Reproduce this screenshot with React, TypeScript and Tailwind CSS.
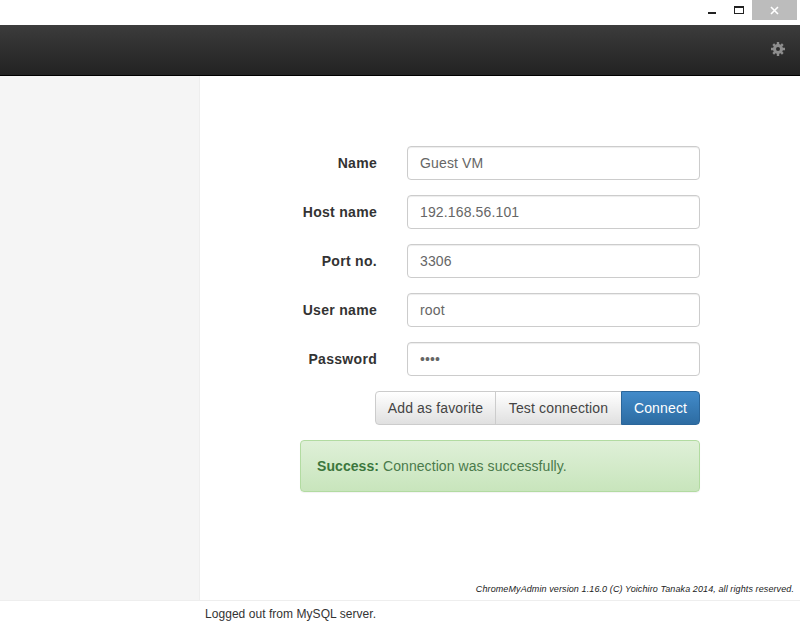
import React from "react";

function Field({ label, value, type = "text" }: { label: string; value: string; type?: string }) {
  return (
    <div className="flex items-center h-[34px] mb-[15px]">
      <label className="w-[77px] text-right font-bold text-[14px] tracking-[0.3px] text-[#333]">{label}</label>
      <input
        readOnly
        type={type}
        value={value}
        className="ml-[30px] w-[293px] h-[34px] px-3 rounded border border-[#ccc] bg-white text-[14px] tracking-[0.14px] text-[#666] outline-none shadow-[inset_0_1px_1px_rgba(0,0,0,0.075)]"
      />
    </div>
  );
}

export default function App() {
  return (
    <div className="w-[800px] h-[625px] flex flex-col bg-white overflow-hidden font-['Liberation_Sans',Arial,sans-serif]">
      <div className="h-[25px] flex justify-end shrink-0">
        <div className="w-[26px] flex items-start justify-center pt-[12px] mr-px">
          <div className="w-2 h-[2px] bg-[#222]" />
        </div>
        <div className="w-[26px] flex items-start justify-center pt-[6px]">
          <div className="w-[10px] h-2 border border-[#222] border-t-2" />
        </div>
        <div className="w-[45px] h-[20px] bg-[#bcbcbc] flex items-center justify-center mr-[3px]">
          <svg width="9" height="9" viewBox="0 0 9 9">
            <path d="M1 1l7 7M8 1l-7 7" stroke="#fff" strokeWidth="1.6" fill="none" />
          </svg>
        </div>
      </div>
      <div className="h-[51px] shrink-0 flex items-center justify-end pr-[15px] bg-gradient-to-b from-[#3c3c3c] to-[#222] border-b border-black">
        <svg width="14" height="14" viewBox="0 0 14 14" className="mb-[2px]">
          <g stroke="#8d8d8d" strokeWidth="2.4">
            <path d="M7 0v14M0 7h14M2.2 2.2l9.6 9.6M11.8 2.2L2.2 11.8" />
          </g>
          <circle cx="7" cy="7" r="5" fill="#8d8d8d" />
          <circle cx="7" cy="7" r="2" fill="#2d2d2d" />
        </svg>
      </div>
      <div className="flex-1 flex min-h-0">
        <div className="w-[200px] bg-[#f5f5f5] border-r border-[#eee] shrink-0" />
        <div className="flex-1 flex flex-col">
          <div className="flex-1 pt-[70px] pl-[100px]">
            <div className="w-[400px]">
              <Field label="Name" value="Guest VM" />
              <Field label="Host name" value="192.168.56.101" />
              <Field label="Port no." value="3306" />
              <Field label="User name" value="root" />
              <Field label="Password" value="root" type="password" />
              <div className="flex justify-end h-[34px] text-[14px] tracking-[0.14px]">
                <button className="h-[34px] w-[121px] rounded-l border border-[#ccc] bg-gradient-to-b from-white to-[#e0e0e0] text-[#444]">
                  Add as favorite
                </button>
                <button className="h-[34px] w-[127px] -ml-px border border-[#ccc] bg-gradient-to-b from-white to-[#e0e0e0] text-[#444]">
                  Test connection
                </button>
                <button className="h-[34px] w-[79px] -ml-px rounded-r border border-[#2b669a] bg-gradient-to-b from-[#428bca] to-[#2d6ca2] text-white">
                  Connect
                </button>
              </div>
              <div className="mt-[15px] h-[52px] px-4 flex items-center rounded border border-[#b2dba1] bg-gradient-to-b from-[#dff0d8] to-[#c8e5bc] text-[14px] tracking-[0.07px] text-[#4a7a4b] shadow-[0_1px_1px_rgba(0,0,0,0.05)]">
                <span>
                  <b className="text-[#3c763d]">Success:</b> Connection was successfully.
                </span>
              </div>
            </div>
          </div>
          <div className="h-[24px] flex items-start justify-end pr-[6px] pt-[7px] text-[9px] tracking-[0.1px] italic text-[#222]">
            ChromeMyAdmin version 1.16.0 (C) Yoichiro Tanaka 2014, all rights reserved.
          </div>
        </div>
      </div>
      <div className="h-[25px] shrink-0 border-t border-[#eee] pl-[205px] pt-[4px] text-[12px] tracking-[0.05px] text-[#333]">
        Logged out from MySQL server.
      </div>
    </div>
  );
}
